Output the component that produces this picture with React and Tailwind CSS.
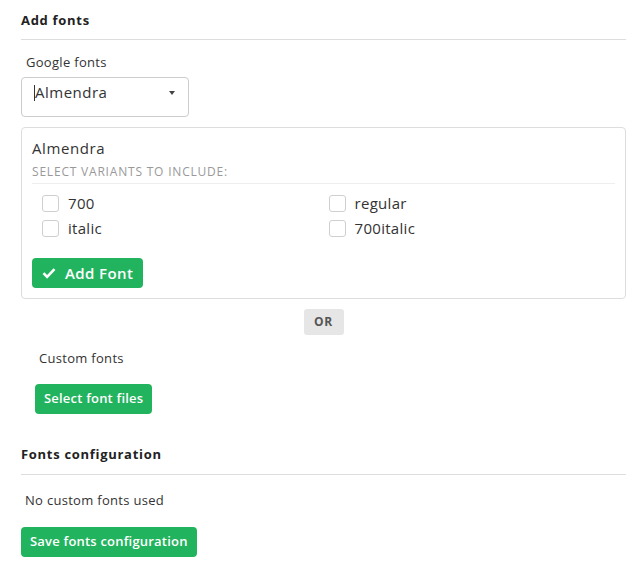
import React from 'react'

const font = { fontFamily: '"Open Sans", "DejaVu Sans", sans-serif' }

function Check({ label }) {
  return (
    <label className="flex items-center h-[25px]">
      <span className="w-[17px] h-[17px] border border-[#cfcfcf] rounded-[3px] bg-white mr-[9px]" />
      <span className="text-[15px] tracking-[0.3px] text-[#333]">{label}</span>
    </label>
  )
}

export default function App() {
  return (
    <div className="w-[636px] h-[568px] bg-white text-[#333] pl-[21px] pr-[10px]" style={font}>
      <h2 className="pt-[11px] text-[13px] font-bold tracking-[0.7px] text-[#222] leading-[18px]">Add fonts</h2>
      <div className="mt-[10px] border-t border-[#ddd]" />

      <div className="pl-[5px] mt-[13px] text-[13px] tracking-[0.3px] leading-[18px] text-[#333]">Google fonts</div>
      <div className="mt-[6px] w-[168px] h-[40px] border border-[#ccc] rounded-[4px] flex items-center justify-between pl-[12px] pr-[13px] pb-[9px]">
        <span className="text-[15px] tracking-[0.5px] text-[#333] flex items-center">
          <span className="w-px h-[16px] bg-[#333]" />
          Almendra
        </span>
        <span className="w-0 h-0 border-l-[3px] border-r-[3px] border-t-[4px] border-l-transparent border-r-transparent border-t-[#444]" />
      </div>

      <div className="mt-[10px] border border-[#ddd] rounded-[4px] px-[10px] pt-[10px] pb-[10px]">
        <div className="text-[15px] tracking-[0.6px] text-[#333] leading-[20px]">Almendra</div>
        <div className="mt-[7px] text-[12px] tracking-[0.8px] uppercase text-[#999] leading-[14px] pb-[4px] border-b border-[#eee]">
          Select variants to include:
        </div>
        <div className="grid grid-cols-2 pl-[10px] mt-[7px]">
          <Check label="700" />
          <Check label="regular" />
          <Check label="italic" />
          <Check label="700italic" />
        </div>
        <button className="mt-[17px] h-[30px] px-[10px] rounded-[4px] bg-[#22b35e] text-white text-[15px] tracking-[0.4px] font-semibold flex items-center gap-[9px]">
          <svg width="14" height="12" viewBox="0 0 14 12" fill="none">
            <path d="M1.5 6.2l3.6 3.6L12.5 2.2" stroke="white" strokeWidth="2.6" />
          </svg>
          Add Font
        </button>
      </div>

      <div className="flex justify-center mt-[10px]">
        <span className="h-[26px] w-[40px] rounded-[3px] bg-[#e6e6e6] text-[#555] text-[12px] tracking-[0.8px] font-bold flex items-center justify-center">OR</span>
      </div>

      <div className="pl-[18px] mt-[14px] text-[13px] tracking-[0.3px] leading-[18px] text-[#333]">Custom fonts</div>
      <button className="ml-[14px] mt-[17px] h-[30px] px-[9px] rounded-[4px] bg-[#22b35e] text-white text-[13px] tracking-[0.2px] font-semibold">
        Select font files
      </button>

      <h2 className="mt-[31px] text-[13px] font-bold tracking-[0.7px] text-[#222] leading-[18px]">Fonts configuration</h2>
      <div className="mt-[11px] border-t border-[#ddd]" />
      <div className="pl-[4px] mt-[16px] text-[13px] tracking-[0.3px] leading-[18px] text-[#333]">No custom fonts used</div>
      <button className="mt-[18px] h-[30px] px-[9px] rounded-[4px] bg-[#22b35e] text-white text-[13px] tracking-[0.2px] font-semibold">
        Save fonts configuration
      </button>
    </div>
  )
}
